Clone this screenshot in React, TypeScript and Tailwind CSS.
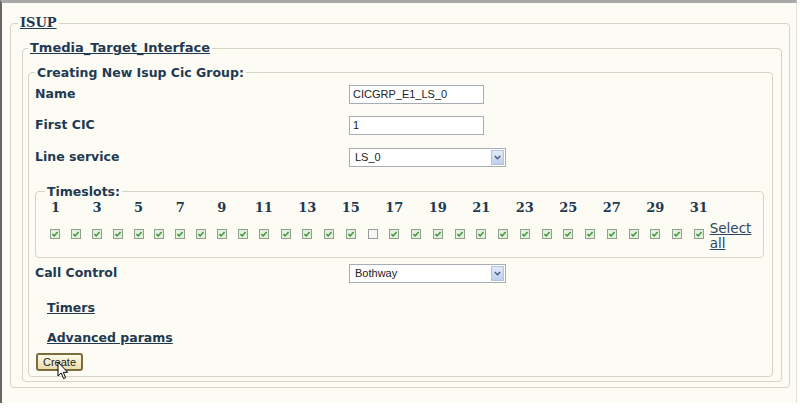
import React from 'react';

// form page: ISUP > Tmedia_Target_Interface > new cic group

const label = "font-['DejaVu_Sans',Verdana,sans-serif] text-[12.5px] font-bold text-[#1f3953]";
const field = "font-['Liberation_Sans',Arial,sans-serif] text-[11px] text-[#222]";

const CheckBox: React.FC<{ on: boolean }> = ({ on }) => (
    <span
        className={`flex h-[10px] w-[10px] items-center justify-center border ${
            on ? 'border-[#8fa08f] bg-[#e4efdd]' : 'border-[#9c9c9c] bg-[#f6f6f4]'
        }`}
    >
        {on && (
            <svg width="8" height="8" viewBox="0 0 8 8">
                <path d="M1.4 4.1 L3.2 5.9 L6.6 2.1" stroke="#3d9a3d" strokeWidth="1.5" fill="none" />
            </svg>
        )}
    </span>
);

const TextBox: React.FC<{ value: string }> = ({ value }) => (
    <div className={`flex h-[19px] w-[135px] items-center border border-[#a7adb5] bg-white pl-[3px] ${field}`}>
        {value}
    </div>
);

const SelectBox: React.FC<{ value: string }> = ({ value }) => (
    <div className="flex h-[19px] w-[157px] items-center border border-[#a7adb5] bg-white pl-[5px] pr-[1px]">
        <span className={`flex-1 ${field}`}>{value}</span>
        <span className="flex h-[15px] w-[13px] items-center justify-center border border-[#b3c4e0] bg-gradient-to-b from-[#e3ebf8] to-[#bccfee]">
            <svg width="7" height="5" viewBox="0 0 7 5">
                <path d="M0.8 1 L3.5 3.8 L6.2 1" stroke="#4a5a78" strokeWidth="1.4" fill="none" />
            </svg>
        </span>
    </div>
);

const Row: React.FC<{ name: string; h: string; children: React.ReactNode }> = ({ name, h, children }) => (
    <div className={`grid grid-cols-[314px_1fr] items-center ${h}`}>
        <span className={label}>{name}</span>
        <div>{children}</div>
    </div>
);

const slots = Array.from({ length: 31 }, (_, i) => i + 1);

const App: React.FC = () => {
    return (
        <div className="h-[412px] w-[800px] overflow-hidden bg-white">
            <div className="relative h-[403px] w-[797px] border-t-[3px] border-l-2 border-r border-t-[#a9a9a9] border-l-[#666] border-r-[#e2dfd6] bg-[#fdfcf4] pl-[8px] pr-[6px] pt-[12px]">
                {/* ISUP */}
                <fieldset className="rounded-[4px] border border-[#d6d3c8] pb-[5px] pl-[11px] pr-[7px] pt-[9px]">
                    <legend className="ml-[-4px] px-[2px] font-['DejaVu_Serif',Georgia,serif] text-[13px] font-bold leading-[16px] text-[#1f3953] underline">
                        ISUP
                    </legend>

                    <fieldset className="rounded-[4px] border border-[#d6d3c8] pb-[4px] pl-[5px] pr-[8px] pt-[8.5px]">
                        <legend className="px-[2px] font-['DejaVu_Sans',Verdana,sans-serif] text-[13px] font-bold leading-[16px] text-[#1f3953] underline">
                            Tmedia_Target_Interface
                        </legend>

                        <fieldset className="rounded-[4px] border border-[#d6d3c8] pb-[5px] pl-[6px] pr-[8px]">
                            <legend className={`px-[2px] leading-[15px] ${label}`}>Creating New Isup Cic Group:</legend>

                            <Row name="Name" h="h-[30px]">
                                <TextBox value="CICGRP_E1_LS_0" />
                            </Row>
                            <Row name="First CIC" h="h-[32px]">
                                <TextBox value="1" />
                            </Row>
                            <Row name="Line service" h="h-[32px]">
                                <SelectBox value="LS_0" />
                            </Row>

                            <fieldset className="mt-[10px] rounded-[4px] border border-[#d6d3c8] pb-[6.5px] pl-[9px]">
                                <legend className={`px-[2px] leading-[15px] ${label}`}>Timeslots:</legend>
                                <div className="flex items-start">
                                    {slots.map((n) => (
                                        <div
                                            key={n}
                                            className={`flex flex-col items-center ${n <= 10 ? 'w-[20.8px]' : 'w-[21.75px]'}`}
                                        >
                                            <span className="h-[18px] whitespace-nowrap font-['DejaVu_Serif',Georgia,serif] text-[13px] font-bold leading-[18px] text-[#1f3953]">
                                                {n % 2 === 1 ? n : ''}
                                            </span>
                                            <span className="mt-[12px]">
                                                <CheckBox on={n !== 16} />
                                            </span>
                                        </div>
                                    ))}
                                    <a className="mt-[22px] font-['DejaVu_Sans',Verdana,sans-serif] text-[13.5px] leading-[15px] text-[#2b4660] underline">
                                        Select
                                        <br />
                                        all
                                    </a>
                                </div>
                            </fieldset>

                            <Row name="Call Control" h="h-[31px]">
                                <SelectBox value="Bothway" />
                            </Row>

                            <div className="mt-[4px] flex h-[30px] items-center pl-[12px]">
                                <a className={`underline ${label}`}>Timers</a>
                            </div>
                            <div className="flex h-[30px] items-center pl-[12px]">
                                <a className={`underline ${label}`}>Advanced params</a>
                            </div>

                            <button className="ml-[1px] flex h-[18px] w-[47px] items-center justify-center rounded-[3px] border-2 border-[#7d6b3e] bg-gradient-to-b from-[#fffbea] to-[#eadcaa] font-['Liberation_Sans',Arial,sans-serif] text-[11px] text-[#222]">
                                Create
                            </button>
                        </fieldset>
                    </fieldset>
                </fieldset>

                {/* mouse pointer over the button */}
                <svg className="absolute left-[55px] top-[358px]" width="12" height="19" viewBox="0 0 12 19">
                    <path
                        d="M1 1 L1 15 L4.2 12 L6.6 17.6 L8.6 16.7 L6.3 11.3 L10.6 11.3 Z"
                        fill="#fff"
                        stroke="#000"
                        strokeWidth="1"
                        strokeLinejoin="round"
                    />
                </svg>
            </div>
        </div>
    );
};

export default App;
